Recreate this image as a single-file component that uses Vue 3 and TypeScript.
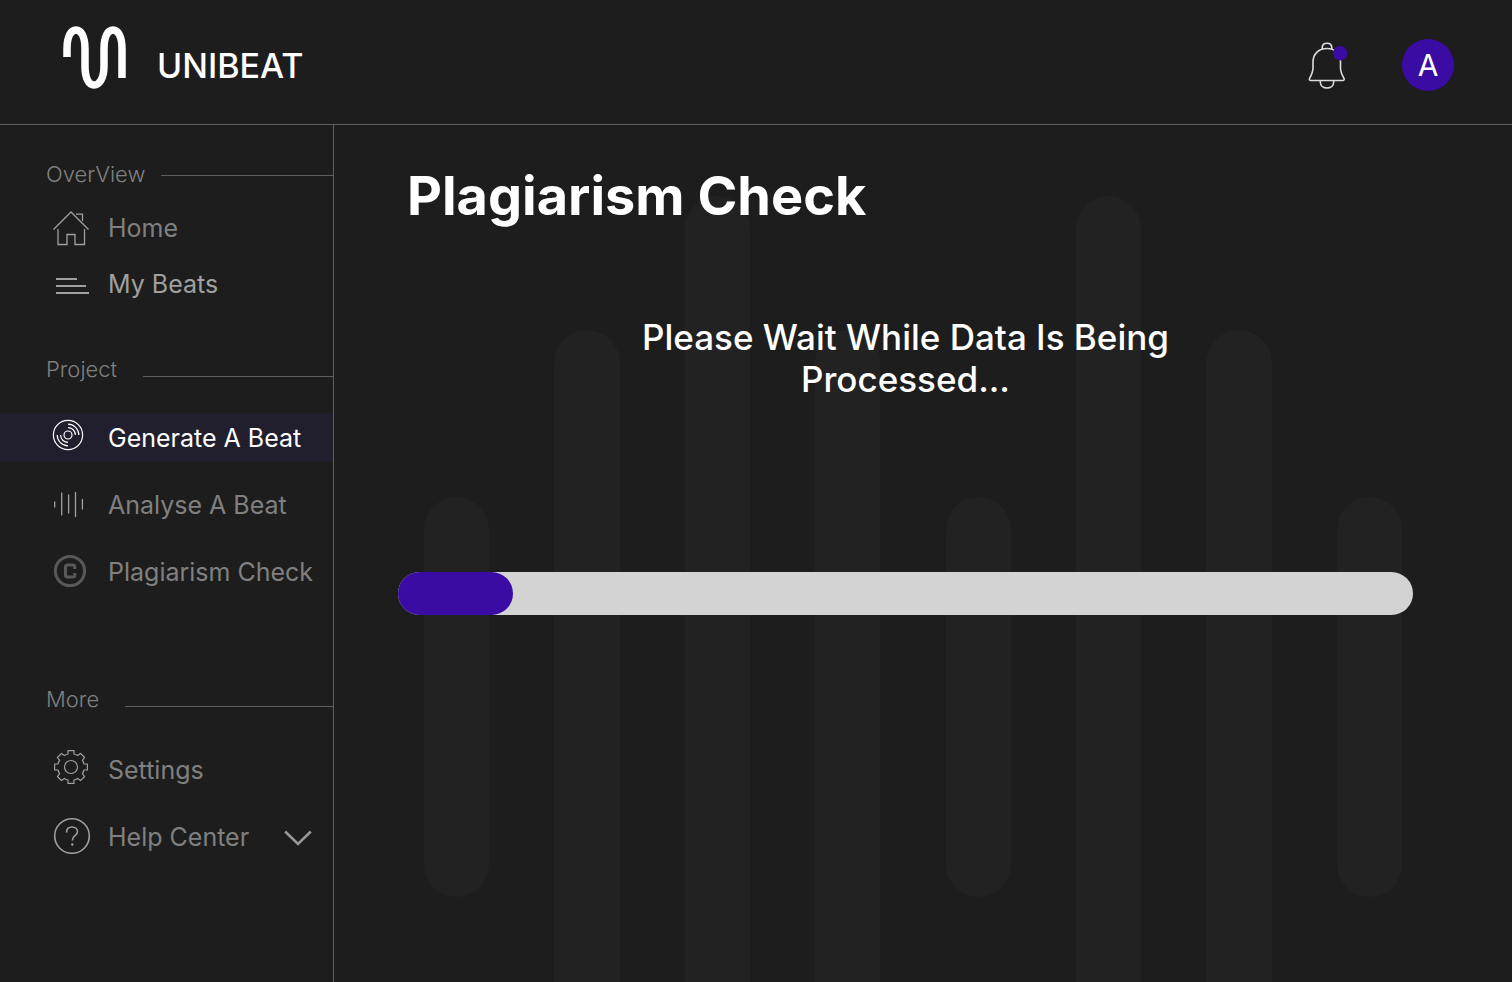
<script setup lang="ts">
type IconName = 'home' | 'beats' | 'disc' | 'wave' | 'copyright' | 'gear' | 'help'

interface NavItem {
  label: string
  icon: IconName
  tone?: 'light' | 'active'
  expandable?: boolean
}

interface NavGroup {
  id: string
  title: string
  items: NavItem[]
}

const groups: NavGroup[] = [
  {
    id: 'overview',
    title: 'OverView',
    items: [
      { label: 'Home', icon: 'home' },
      { label: 'My Beats', icon: 'beats', tone: 'light' },
    ],
  },
  {
    id: 'project',
    title: 'Project',
    items: [
      { label: 'Generate A Beat', icon: 'disc', tone: 'active' },
      { label: 'Analyse A Beat', icon: 'wave' },
      { label: 'Plagiarism Check', icon: 'copyright' },
    ],
  },
  {
    id: 'more',
    title: 'More',
    items: [
      { label: 'Settings', icon: 'gear' },
      { label: 'Help Center', icon: 'help', expandable: true },
    ],
  },
]

const bars = ['short', 'medium', 'tall', 'medium', 'short', 'tall', 'medium', 'short']
const progress = 11.3
</script>

<template>
  <div class="app">
    <header class="topbar">
      <a class="brand" href="#">
        <svg class="brand-mark" width="64" height="64" viewBox="0 0 64 64" aria-hidden="true">
          <path
            d="M4 31V23C4 10 8 4 13 4C18 4 22 10 22 23V40C22 53 26 59 31 59C36 59 41 53 41 40V23C41 10 45 4 50 4C55 4 59 10 59 23V52"
            fill="none" stroke="#fff" stroke-width="7.500" />
        </svg>
        <span class="brand-name">UNIBEAT</span>
      </a>
      <div class="actions">
        <button class="bell" type="button" aria-label="Notifications">
          <svg width="40" height="48" viewBox="0 0 40 48" fill="none" stroke="#dcdcdc" stroke-width="1.600" aria-hidden="true">
            <path d="M3 38.500C1.500 38.500 1 37.500 1.600 36.300C4 32 5 30 5 26V20C5 11.500 11 6.500 19 6.500C27 6.500 32.500 11.500 32.500 20V26C32.500 30 33.500 32 36 36.300C36.600 37.500 36 38.500 34.600 38.500Z" stroke-linejoin="round" />
            <path d="M14.200 7.500V5.800C14.200 3 16.200 1.200 19 1.200C21.800 1.200 23.800 3 23.800 5.800V7.500" />
            <path d="M12.300 38.800V40C12.300 43.600 15.200 46 19 46C22.800 46 25.700 43.600 25.700 40V38.800" />
            <circle cx="32.200" cy="11.200" r="7.200" fill="#3a0ca3" stroke="none" />
          </svg>
        </button>
        <button class="avatar" type="button" aria-label="Account">A</button>
      </div>
    </header>

    <div class="body">
      <nav class="sidebar" aria-label="Main">
        <section v-for="group in groups" :key="group.id" class="group" :class="group.id">
          <h2 class="group-title">{{ group.title }}</h2>
          <ul class="list">
            <li v-for="item in group.items" :key="item.label">
              <a class="item" :class="item.tone" href="#">
                <svg class="icon" width="40" height="40" viewBox="0 0 40 40" fill="none" stroke="currentColor" aria-hidden="true">
                  <g v-if="item.icon === 'home'" stroke="#a0a0a0" stroke-width="1.300">
                    <path d="M1.500 21.500L19 4L36.500 21.500" />
                    <path d="M24 6.200H30.500V13" />
                    <path d="M6 21V36.500H15V26.500H23V36.500H32.500V21" />
                  </g>
                  <g v-else-if="item.icon === 'beats'" stroke-width="2">
                    <path d="M4 15H25M4 22H34M4 29H37" />
                  </g>
                  <g v-else-if="item.icon === 'disc'" stroke-width="1.200">
                    <circle cx="16" cy="17" r="14.600" />
                    <circle cx="16" cy="17" r="4" />
                    <path d="M16 9.600A7.400 7.400 0 0 1 23.400 17M16 6.200A10.800 10.800 0 0 1 26.800 17" />
                    <path d="M16 24.400A7.400 7.400 0 0 1 8.600 17M16 27.800A10.800 10.800 0 0 1 5.200 17" />
                  </g>
                  <g v-else-if="item.icon === 'wave'" stroke="#a0a0a0" stroke-width="1.300" stroke-linecap="round">
                    <path d="M2.700 17V22M9.700 8V30M16.600 10V28M23.500 7.500V31.500M30.400 14.500V24" />
                  </g>
                  <g v-else-if="item.icon === 'copyright'" stroke="#585858">
                    <circle cx="18" cy="19" r="14.600" stroke-width="3" />
                    <path d="M22.800 17V14.800Q22.800 13 21 13H15.600Q13.500 13 13.500 15V23Q13.500 25 15.600 25H21Q22.800 25 22.800 23.200V21" stroke-width="3" />
                  </g>
                  <g v-else-if="item.icon === 'gear'" stroke="#a0a0a0" stroke-width="1.200" stroke-linejoin="round">
                    <circle cx="19" cy="17" r="6.500" />
                    <path d="M16 0.600H22V4Q24 4.500 25.600 5.600L28.500 3.400L32.600 7.500L30.400 10.400Q31.500 12 32 14H35.400V20H32Q31.500 22 30.400 23.600L32.600 26.500L28.500 30.600L25.600 28.400Q24 29.500 22 30V33.400H16V30Q14 29.500 12.400 28.400L9.500 30.600L5.400 26.500L7.600 23.600Q6.500 22 6 20H2.600V14H6Q6.500 12 7.600 10.400L5.400 7.500L9.500 3.400L12.400 5.600Q14 4.500 16 4Z" />
                  </g>
                  <g v-else stroke="#a0a0a0">
                    <circle cx="20" cy="19" r="17.300" stroke-width="1.600" />
                    <path d="M14.500 15.500C14.500 12 16.800 10 20 10C23.200 10 25.500 12 25.500 14.700C25.500 18.500 20.300 18.600 20.300 23.500" stroke-width="1.600" />
                    <circle cx="20.300" cy="27.500" r="1.200" fill="#a0a0a0" stroke="none" />
                  </g>
                </svg>
                <span class="label">{{ item.label }}</span>
                <svg v-if="item.expandable" class="chevron" width="28" height="20" viewBox="0 0 28 20" fill="none" aria-hidden="true">
                  <path d="M1.200 4.500L14 17L26.800 4.500" stroke="#969696" stroke-width="2.600" />
                </svg>
              </a>
            </li>
          </ul>
        </section>
      </nav>

      <main class="main">
        <div class="backdrop" aria-hidden="true">
          <div class="backdrop-bars">
            <span v-for="(size, i) in bars" :key="i" class="bar" :class="size"></span>
          </div>
        </div>
        <h1 class="title">Plagiarism Check</h1>
        <p class="message">Please Wait While Data Is Being Processed...</p>
        <div class="track" role="progressbar" aria-label="Processing" :aria-valuenow="progress" aria-valuemin="0" aria-valuemax="100">
          <div class="fill" :style="{ width: progress + '%' }"></div>
        </div>
      </main>
    </div>
  </div>
</template>

<style>
body {
  margin: 0;
  background: #1d1d1d;
}
</style>

<style scoped>
.app {
  display: flex;
  flex-direction: column;
  min-height: 100vh;
  background: #1d1d1d;
  color: #fff;
  font-family: Inter, "Liberation Sans", sans-serif;
}

.topbar {
  display: flex;
  align-items: center;
  justify-content: space-between;
  box-sizing: border-box;
  height: 125px;
  padding: 0 58px 0 63px;
  border-bottom: 1px solid #5e5e5e;
}

.brand {
  display: flex;
  align-items: flex-end;
  gap: 30px;
  padding-bottom: 8px;
  color: #fff;
  text-decoration: none;
}

.brand-name {
  padding-bottom: 4px;
  font-size: 34px;
  font-weight: 500;
  line-height: 40px;
}

.actions {
  display: flex;
  align-items: center;
  gap: 54px;
  padding-top: 6px;
}

button {
  padding: 0;
  border: 0;
  background: none;
  color: inherit;
  font-family: inherit;
  cursor: pointer;
}

.bell {
  padding-top: 2px;
}

.bell svg {
  display: block;
}

.avatar {
  width: 52px;
  height: 52px;
  border-radius: 50%;
  background: #3a0ca3;
  font-size: 30px;
}

.body {
  display: flex;
  flex: 1;
}

.sidebar {
  box-sizing: border-box;
  flex: none;
  width: 334px;
  padding-top: 33px;
  border-right: 1px solid #5e5e5e;
}

.group-title {
  display: flex;
  align-items: center;
  gap: 16px;
  margin: 0;
  padding-left: 46px;
  color: #808080;
  font-size: 22px;
  font-weight: 300;
  line-height: 32px;
}

.group-title::after {
  content: "";
  flex: 1;
  height: 1px;
  margin-top: 2px;
  background: #5e5e5e;
}

.project .group-title,
.more .group-title {
  gap: 26px;
}

.project .group-title::after,
.more .group-title::after {
  margin-top: 14px;
}

.list {
  display: flex;
  flex-direction: column;
  margin: 0;
  padding: 0;
  list-style: none;
}

.overview .list {
  gap: 8px;
  padding: 14px 0 45px;
}

.project .list {
  gap: 18px;
  padding: 28px 0 87px;
}

.more .list {
  gap: 18px;
  padding-top: 30px;
}

.item {
  display: flex;
  align-items: center;
  gap: 16px;
  height: 49px;
  padding-left: 52px;
  color: #808080;
  font-size: 25px;
  text-decoration: none;
}

.overview .item {
  height: 48px;
}

.item.light {
  color: #a0a0a0;
}

.item.active {
  background: #211f2d;
  color: #fff;
}

.icon,
.chevron {
  flex: none;
}

.chevron {
  margin-left: 19px;
}

.main {
  position: relative;
  flex: 1;
  padding: 37px 99px 60px 64px;
}

.backdrop {
  position: absolute;
  inset: 0;
  overflow: hidden;
}

.backdrop-bars {
  display: flex;
  align-items: center;
  justify-content: space-between;
  height: 1144px;
  padding: 0 110px 0 90px;
}

.bar {
  width: calc(100% / 15);
  border-radius: 33px;
  background: #222;
}

.bar.short {
  height: 400px;
}

.bar.medium {
  height: 734px;
}

.bar.tall {
  height: 1002px;
}

.title,
.message,
.track {
  position: relative;
}

.title {
  margin: 0;
  padding-left: 9px;
  font-size: 54px;
  font-weight: 700;
  line-height: 68px;
}

.message {
  max-width: 560px;
  margin: 86px auto 0;
  font-size: 35px;
  font-weight: 500;
  line-height: 42px;
  text-align: center;
}

.track {
  height: 43px;
  margin-top: 172px;
  border-radius: 22px;
  background: rgba(217, 217, 217, 0.97);
}

.fill {
  height: 100%;
  border-radius: 22px;
  background: #3a0ca3;
}
</style>
